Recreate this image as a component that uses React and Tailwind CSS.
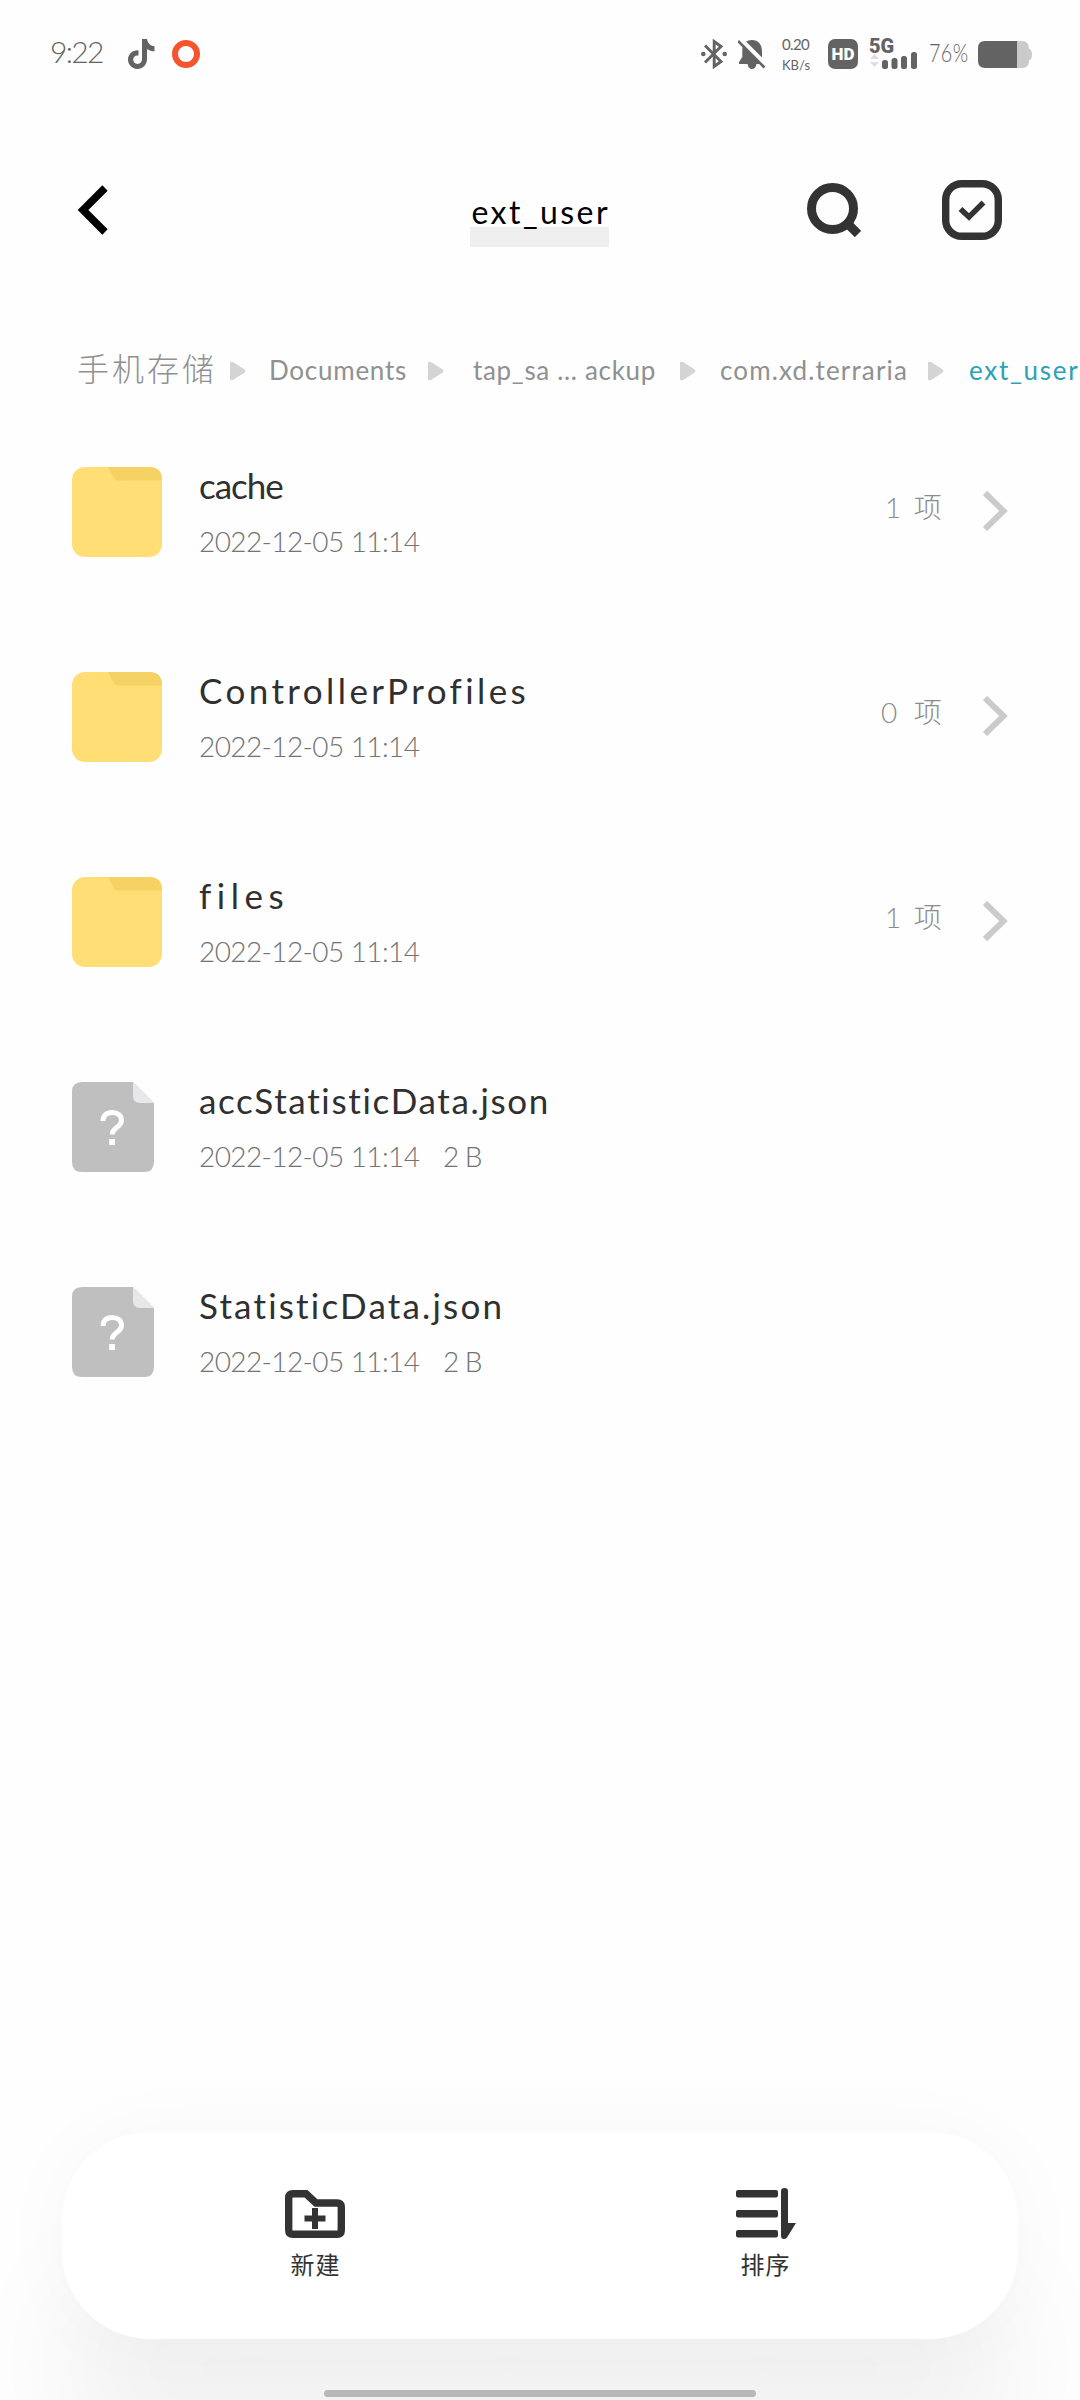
import { useLayoutEffect, useRef, useState } from "react";

// Text spread evenly over the width that its class sets.
function SpacedText({ children, className }) {
  const ref = useRef(null);
  const [spacing, setSpacing] = useState(0);
  useLayoutEffect(() => {
    const inner = ref.current;
    const natural = inner.offsetWidth;
    const room = inner.parentElement.offsetWidth;
    setSpacing((room - natural) / Math.max(1, children.length - 1));
  }, [children]);
  return (
    <span className={`block shrink-0 whitespace-pre ${className}`}>
      <span ref={ref} style={{ letterSpacing: `${spacing}px` }}>{children}</span>
    </span>
  );
}

function StatusBar() {
  return (
    <div className="flex h-[108px] items-center pl-[50px] text-[#636363]">
      <SpacedText className="-mt-1.5 w-[54px] text-[30px] font-light leading-9">9:22</SpacedText>
      <svg className="ml-6 h-[30px] w-[27px]" viewBox="0 0 27 30">
        <path d="M14 0h5c.6 4.2 3.3 6.900 7.500 7.300v5c-2.700 0-5.200-.8-7.500-2.300v10.300c0 5.500-4.300 9.700-9.500 9.700S0 25.700 0 20.500 4.500 11 10.500 11.300v5.200c-3-.6-5.300 1.300-5.300 4 0 2.500 1.900 4.400 4.300 4.400 2.700 0 4.500-1.900 4.500-4.900z" fill="currentColor" />
      </svg>
      <div className="ml-[17px] size-[28px] rounded-full border-[6px] border-[#f4552e]" />
      <svg className="ml-[501px] h-[30px] w-[26px]" viewBox="0 0 26 30" fill="none" stroke="currentColor" strokeWidth="2.900">
        <path d="M4 6.500 20 22.500l-6.800 5V2.500l6.800 5L4 23.500" />
        <circle cx="2.300" cy="15" r="2.300" fill="currentColor" stroke="none" />
        <circle cx="23.700" cy="15" r="2.300" fill="currentColor" stroke="none" />
      </svg>
      <svg className="ml-[11px] h-[31px] w-[28px]" viewBox="0 0 28 31">
        <path d="M14 1C7.800 1 4.300 5.200 4.300 11v7L1 23v2h8.500c.7 3.200 2 5 4.500 5s3.800-1.800 4.500-5H24V12C24 5.500 20.200 1 14 1z" fill="currentColor" />
        <path d="M1-1 28 26" stroke="#fefefe" strokeWidth="5" />
        <path d="M0 2 26.500 28.500" stroke="currentColor" strokeWidth="2.600" />
      </svg>
      <div className="ml-4 flex flex-col gap-[5px]">
        <SpacedText className="w-[28px] text-[15px] leading-4">0.20</SpacedText>
        <SpacedText className="w-[28px] text-[13px] leading-4">KB/s</SpacedText>
      </div>
      <div className="ml-[18px] flex size-[30px] items-center justify-center rounded-[7px] bg-[#636363] font-['Roboto'] text-[17px] font-black leading-none text-white">HD</div>
      <div className="ml-[12px] flex h-[30px] w-[48px] flex-col justify-between">
        <span className="-ml-px font-['Roboto'] text-[20px] font-black leading-[15px]">5G</span>
        <svg className="-mt-[2px] h-[17px] w-[48px] shrink-0" viewBox="0 0 48 17">
          <path d="M0 7 4.500 2 9 7zM0 10h9l-4.500 5z" fill="#dedede" />
          <rect x="12" y="8" width="6" height="9" rx="2.500" fill="currentColor" />
          <rect x="21.500" y="6" width="6" height="11" rx="2.500" fill="currentColor" />
          <rect x="31" y="4" width="6" height="13" rx="2.500" fill="currentColor" />
          <rect x="41" y="0" width="6" height="17" rx="2.500" fill="currentColor" />
        </svg>
      </div>
      <SpacedText className="-mt-1 ml-[11px] mr-[-13px] w-[51px] origin-left scale-x-[0.76] text-[26px] font-light leading-8">76%</SpacedText>
      <svg className="ml-[11px] h-[27px] w-[54px]" viewBox="0 0 54 27">
        <path d="M39 0h5c5 0 7 3 7 8 4 0 4 11 0 11 0 5-2 8-7 8h-5z" fill="#cacaca" />
        <path d="M39 0H7Q0 0 0 7v13q0 7 7 7h32z" fill="currentColor" />
      </svg>
    </div>
  );
}

function Header() {
  return (
    <header className="flex h-[204px] items-center pl-[77px]">
      <svg className="h-[50px] w-[31px]" viewBox="0 0 31 50" fill="none" stroke="#000" strokeWidth="7.500">
        <path d="M28 3 6 25l22 22" />
      </svg>
      <div className="ml-[362px] mt-[22px] flex w-[139px] flex-col items-center">
        <SpacedText className="z-10 w-[136px] text-[32px] leading-8 text-black">ext_user</SpacedText>
        <div className="-mt-px h-[20px] w-full bg-[#efefef]" />
      </div>
      <svg className="ml-[198px] h-[54px] w-[54px]" viewBox="0 0 54 54" fill="none" stroke="#333">
        <circle cx="25.500" cy="25.500" r="21" strokeWidth="9" />
        <path d="M42 42l9 9" strokeWidth="9" />
      </svg>
      <svg className="ml-[81px] h-[60px] w-[60px]" viewBox="0 0 60 60" fill="none" stroke="#333">
        <rect x="3.700" y="3.700" width="52.600" height="52.600" rx="16" strokeWidth="7.400" />
        <path d="m18.500 29 8.500 8L41.500 22.500" strokeWidth="5.500" />
      </svg>
    </header>
  );
}

function Separator({ className }) {
  return (
    <svg className={`h-5 w-4 shrink-0 ${className}`} viewBox="0 0 16 20">
      <path d="M0 2Q0 0 3 1l11 7q3 2 0 4L3 19q-3 1-3-1z" fill="#d4d4d4" />
    </svg>
  );
}

function Breadcrumb() {
  return (
    <nav className="flex h-[98px] items-center pl-[77px] pt-[20px] text-[26px] leading-10 text-[#909090]">
      <SpacedText className="-mt-1 w-[137px] text-[32px] font-light">手机存储</SpacedText>
      <Separator className="ml-[16px]" />
      <SpacedText className="-mt-0.5 ml-[23px] w-[137px]">Documents</SpacedText>
      <Separator className="ml-[22px]" />
      <SpacedText className="-mt-0.5 ml-[29px] w-[182px]">tap_sa ... ackup</SpacedText>
      <Separator className="ml-[25px]" />
      <SpacedText className="-mt-0.5 ml-[24px] w-[187px]">com.xd.terraria</SpacedText>
      <Separator className="ml-[21px]" />
      <SpacedText className="-mt-0.5 ml-[25px] w-[109px] text-[#2ba2b6]">ext_user</SpacedText>
    </nav>
  );
}

function FolderIcon() {
  return (
    <svg className="size-[90px]" viewBox="0 0 90 90">
      <rect width="90" height="90" rx="13" fill="#ffde76" />
      <path d="M36 0h41q13 0 13 13v.5H46q-3 0-4.500-3z" fill="#f6d163" />
    </svg>
  );
}

function FileIcon() {
  return (
    <svg className="h-[90px] w-[82px]" viewBox="0 0 82 90">
      <path d="M10 0h51l21 21v59q0 10-10 10H10Q0 90 0 80V10Q0 0 10 0z" fill="#bfbfbf" />
      <path d="M61 0l21 21H68q-7 0-7-7z" fill="#e8e8ea" />
      <path d="M31 39c0-5.500 3.600-8.500 9-8.500s9.500 2.700 9.500 8c0 7-9.300 6.500-9.300 14" fill="none" stroke="#fff" strokeWidth="5" />
      <rect x="37.200" y="57" width="5.800" height="6" fill="#fff" />
    </svg>
  );
}

const entries = [
  { name: "cache", width: "w-[85px]", count: "1 项", countWidth: "w-[57px]" },
  { name: "ControllerProfiles", width: "w-[326px]", count: "0 项", countWidth: "w-[61px]" },
  { name: "files", width: "w-[84px]", count: "1 项", countWidth: "w-[57px]" },
  { name: "accStatisticData.json", width: "w-[351px]", size: "2 B" },
  { name: "StatisticData.json", width: "w-[304px]", size: "2 B" },
];

function Entry({ name, width, count, countWidth, size }) {
  return (
    <li className="flex h-[205px] items-center pl-[72px] pr-[72px]">
      <div className="w-[127px]">{count ? <FolderIcon /> : <FileIcon />}</div>
      <div className="flex flex-1 flex-col gap-3 pb-0.5">
        <SpacedText className={`text-[35px] leading-[48px] text-[#303030] ${width}`}>{name}</SpacedText>
        <div className="flex text-[28px] font-light leading-10 text-[#737373]">
          <SpacedText className="w-[221px]">2022-12-05 11:14</SpacedText>
          {size && <SpacedText className="ml-[23px] w-[40px]">{size}</SpacedText>}
        </div>
      </div>
      {count && (
        <>
          <SpacedText className={`-mt-2.5 text-[28px] font-light leading-10 text-[#8c8c8c] ${countWidth}`}>{count}</SpacedText>
          <svg className="-mt-0.5 ml-[41px] h-[40px] w-[25px]" viewBox="0 0 25 40" fill="none" stroke="#cbcbcb" strokeWidth="6">
            <path d="M2 2 20.500 20 2 38" />
          </svg>
        </>
      )}
    </li>
  );
}

function Toolbar() {
  return (
    <div className="mx-[62px] flex h-[207px] rounded-[88px] bg-white pt-[56px] text-[24px] leading-8 text-[#333] shadow-[0_0_80px_rgba(0,0,0,0.03),0_130px_120px_rgba(0,0,0,0.05)]">
      <div className="ml-[213px] flex w-[80px] flex-col items-center">
        <svg className="h-[52px] w-[62px]" viewBox="0 0 62 52" fill="none" stroke="#333">
          <path d="M10 5.700H22L32 15H53q4.300 0 4.300 4.300V42q0 4.300-4.300 4.300H9Q4.700 46.300 4.700 42V10Q4.700 5.700 9 5.700z" strokeWidth="7.400" />
          <path d="M31 20v21M20.500 30.500h21" strokeWidth="6" />
        </svg>
        <SpacedText className="mt-[9px] w-[49px]">新建</SpacedText>
      </div>
      <div className="ml-[370px] flex w-[80px] flex-col items-center">
        <svg className="ml-[2px] h-[52px] w-[60px]" viewBox="0 0 60 52" fill="#333">
          <rect y="2" width="42" height="7.500" rx="2" />
          <rect y="22" width="42" height="7.500" rx="2" />
          <rect y="42" width="42" height="7.500" rx="2" />
          <path d="M45 3q0-3 3.500-3T52 3v32h8L51 49.500q-2 2-4 1.500t-2-3z" />
        </svg>
        <SpacedText className="mt-[9px] w-[49px]">排序</SpacedText>
      </div>
    </div>
  );
}

export default function App() {
  return (
    <div className="flex h-[2400px] w-[1080px] flex-col overflow-hidden bg-[#fefefe] font-['Lato','Noto_Sans_CJK_SC',sans-serif]">
      <StatusBar />
      <Header />
      <Breadcrumb />
      <ul className="-mt-px flex flex-col">
        {entries.map((entry) => (
          <Entry key={entry.name} {...entry} />
        ))}
      </ul>
      <div className="mt-auto">
        <Toolbar />
        <div className="relative mx-auto mb-[3px] mt-[51px] h-[7px] w-[432px] rounded-full bg-[#b8b8b8]" />
      </div>
    </div>
  );
}
